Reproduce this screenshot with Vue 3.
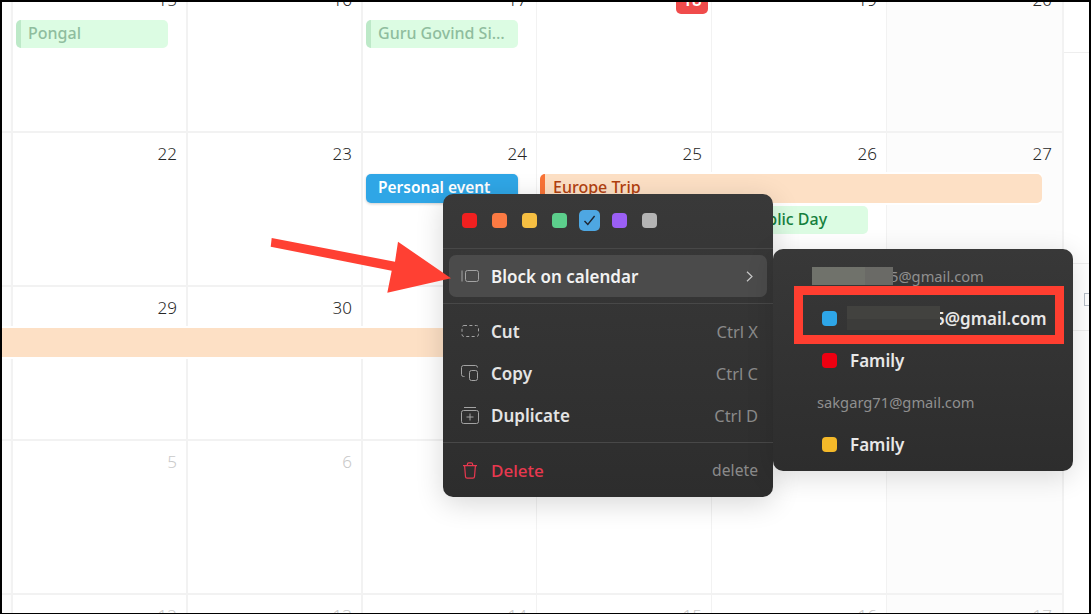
<template>
  <div class="frame">
    <div class="cal">
      <div class="weeks">
        <div v-for="(week, w) in weeks" :key="w" class="week">
          <div class="strip"></div>
          <div
            v-for="(day, d) in week.days"
            :key="d"
            class="cell"
            :class="{ weekend: d === 5, faded: week.faded, thin: d > 2 }"
            :style="{ gridColumn: d + 2 }"
          >
            <span v-if="day === 18 && w === 0" class="today">18</span>
            <span v-else class="num">{{ day }}</span>
          </div>
          <div
            v-for="ev in week.events"
            :key="ev.label"
            class="event"
            :class="ev.kind"
            :style="{ gridColumn: ev.col, gridRow: ev.row }"
          >
            <span class="event-label">{{ ev.label }}</span>
          </div>
        </div>
      </div>
      <aside class="panel">
        <div class="panel-row first"></div>
        <div class="panel-row second"></div>
        <div class="panel-row third"><span class="cut-box"></span></div>
      </aside>
    </div>

    <div class="menu">
      <div class="swatches">
        <span
          v-for="c in swatches"
          :key="c.color"
          class="swatch"
          :class="{ picked: c.picked }"
          :style="{ background: c.color }"
        >
          <svg v-if="c.picked" width="13" height="11" viewBox="0 0 13 11">
            <path d="M1.5 6 L4.8 9.4 L11.6 1" fill="none" stroke="#1f2530" stroke-width="1.4" />
          </svg>
        </span>
      </div>
      <div class="section">
        <div class="item active">
          <svg class="icon" width="18" height="14" viewBox="0 0 18 14" fill="none" stroke="#a3a3a3">
            <path d="M1 1.5v11" />
            <rect x="4.5" y="1.5" width="13" height="11" rx="2" />
          </svg>
          <span class="label">Block on calendar</span>
          <svg class="chev" width="7" height="11" viewBox="0 0 7 11" fill="none" stroke="#c9c9c9" stroke-width="1.2">
            <path d="M1 .8 L6 5.5 L1 10.2" />
          </svg>
        </div>
      </div>
      <div class="section edit">
        <div class="item">
          <svg class="icon" width="18" height="14" viewBox="0 0 18 14" fill="none" stroke="#a3a3a3">
            <rect x="1" y="1.5" width="16.5" height="11" rx="2" stroke-dasharray="3 2.4" />
          </svg>
          <span class="label">Cut</span>
          <span class="keys">Ctrl X</span>
        </div>
        <div class="item">
          <svg class="icon" width="18" height="16" viewBox="0 0 18 16" fill="none" stroke="#a3a3a3">
            <path d="M3.5 11.5h-1a2 2 0 0 1-2-2v-7a2 2 0 0 1 2-2h12a2 2 0 0 1 2 2" />
            <rect x="8.5" y="5.5" width="8" height="10" rx="2" />
          </svg>
          <span class="label">Copy</span>
          <span class="keys">Ctrl C</span>
        </div>
        <div class="item">
          <svg class="icon" width="18" height="17" viewBox="0 0 18 17" fill="none" stroke="#a3a3a3">
            <path d="M3 .5h12" />
            <rect x=".5" y="3.5" width="17" height="13" rx="2" />
            <path d="M9 6.5v7M5.5 10h7" />
          </svg>
          <span class="label">Duplicate</span>
          <span class="keys">Ctrl D</span>
        </div>
      </div>
      <div class="section danger">
        <div class="item">
          <svg class="icon trash" width="16" height="17" viewBox="0 0 16 17" fill="none" stroke="#e8384f" stroke-width="1.2">
            <path d="M1 3.6h14M5.4 3.4V2.2a1.4 1.4 0 0 1 1.4-1.4h2.4a1.4 1.4 0 0 1 1.4 1.4v1.2" />
            <path d="M2.6 3.8l.9 10.8a1.6 1.6 0 0 0 1.6 1.5h5.8a1.6 1.6 0 0 0 1.6-1.5l.9-10.8" />
          </svg>
          <span class="label">Delete</span>
          <span class="keys del">delete</span>
        </div>
      </div>
    </div>

    <div class="submenu">
      <div class="sub-head">
        <span class="mask mask-head"></span><span>5@gmail.com</span>
      </div>
      <div class="sub-item">
        <span class="dot" style="background: #2ea6e8"></span>
        <span class="mask mask-item"></span><span>5@gmail.com</span>
      </div>
      <div class="sub-item">
        <span class="dot" style="background: #ee0011"></span>
        <span>Family</span>
      </div>
      <div class="sub-head second">sakgarg71@gmail.com</div>
      <div class="sub-item">
        <span class="dot" style="background: #f4b929"></span>
        <span>Family</span>
      </div>
    </div>

    <div class="highlight"></div>
    <svg class="arrow" width="1091" height="614" viewBox="0 0 1091 614">
      <polygon points="271.7,238 395,261.7 398,241.7 451,278.3 387.3,292.7 391.7,270.7 270.7,246.7" fill="#ff4033" />
    </svg>
  </div>
</template>

<script setup>
const weeks = [
  {
    days: [15, 16, 17, 18, 19, 20],
    events: [
      { label: "Pongal", kind: "holiday dim", col: "2", row: "2" },
      { label: "Guru Govind Singh Jayanti", kind: "holiday dim", col: "4", row: "2" },
    ],
  },
  {
    days: [22, 23, 24, 25, 26, 27],
    events: [
      { label: "Personal event", kind: "personal", col: "4", row: "2" },
      { label: "Europe Trip", kind: "trip", col: "5 / span 3", row: "2" },
      { label: "Republic Day", kind: "holiday", col: "6", row: "3" },
    ],
  },
  {
    days: [29, 30, 31, 1, 2, 3],
    events: [{ label: "", kind: "trip-rest", col: "1 / span 4", row: "2" }],
  },
  { days: [5, 6, 7, 8, 9, 10], faded: true, events: [] },
  { days: [12, 13, 14, 15, 16, 17], faded: true, events: [] },
];

const swatches = [
  { color: "#f02020" },
  { color: "#fb7a43" },
  { color: "#f6bf42" },
  { color: "#5ccf8c" },
  { color: "#4ea7e2", picked: true },
  { color: "#9b5ff5" },
  { color: "#b4b4b4" },
];
</script>

<style>
html,
body {
  margin: 0;
  background: #000;
}
</style>

<style scoped>
.frame {
  position: relative;
  box-sizing: border-box;
  width: 1091px;
  height: 614px;
  border: solid #000;
  border-width: 2px 2px 1px 2px;
  overflow: hidden;
  background: #fff;
  font-family: "Noto Sans", "Open Sans", sans-serif;
  color: #333;
}

.cal {
  display: flex;
  height: 100%;
}

.weeks {
  flex: none;
  width: 1060px;
  margin-top: -23px;
}

.week {
  box-sizing: border-box;
  height: 154px;
  display: grid;
  grid-template-columns: 9px repeat(5, 175px) 176px;
  grid-template-rows: 41px 32px 32px 1fr;
  border-bottom: 2px solid #f2f2f2;
}

.strip {
  grid-column: 1;
  grid-row: 1 / -1;
  background: #fcfcfc;
}

.cell {
  grid-row: 1 / -1;
  box-sizing: border-box;
  border-left: 2px solid #f2f2f2;
  padding: 9px 9px 0 0;
  text-align: right;
  font-size: 17px;
  font-weight: 300;
  line-height: 24px;
  color: #262626;
}

.cell.thin {
  border-left-width: 1px;
}

.cell.weekend {
  background: #fcfcfc;
  padding-right: 10px;
}

.cell.faded {
  color: #c9c9c9;
}

.today {
  display: inline-block;
  box-sizing: border-box;
  width: 32px;
  height: 26px;
  margin-right: -6px;
  border-radius: 5px;
  background: #f04b4b;
  color: #fff;
  font-weight: 600;
  text-align: center;
}

.event {
  box-sizing: border-box;
  height: 29px;
  margin: 0 18px 0 5px;
  padding-left: 12px;
  border-radius: 5px;
  font-size: 16px;
  font-weight: 600;
  line-height: 27px;
  box-shadow: 0 2px 0 #fff, 0 -2px 0 #fff;
  min-width: 0;
}

.event-label {
  display: block;
  overflow: hidden;
  white-space: nowrap;
  text-overflow: ellipsis;
  padding-right: 8px;
}

.holiday {
  height: 28px;
  padding-left: 7px;
  border-left: 5px solid #22c55e;
  background: #dcfce3;
  color: #15803d;
  font-weight: 500;
}

.holiday.dim {
  border-left-color: #bde9c8;
  color: #8fbd9e;
}

.personal {
  background: #2fa6e6;
  color: #fff;
  font-size: 15.5px;
  box-shadow: 0 1px 3px rgba(0, 0, 0, 0.2);
}

.trip {
  margin: 0 20px 0 4px;
  padding-left: 8px;
  border-left: 5px solid #f97336;
  background: #fde0c5;
  color: #b2400f;
  font-weight: 500;
}

.trip-rest {
  margin: 0;
  border-radius: 0;
  background: #fde0c5;
}

.panel {
  flex: 1;
  border-left: 2px solid #f2f2f2;
}

.panel-row {
  box-sizing: border-box;
  border-bottom: 1px solid #eee;
}

.panel-row.first {
  height: 51px;
}

.panel-row.second {
  height: 211px;
}

.panel-row.third {
  height: 67px;
  padding: 29px 0 0 20px;
}

.cut-box {
  display: block;
  width: 8px;
  height: 11px;
  border: 1px solid #b8bfc8;
  border-right: 0;
}

.menu {
  position: absolute;
  left: 441px;
  top: 192px;
  width: 330px;
  height: 303px;
  border-radius: 10px;
  background: linear-gradient(#393939, #2d2d2d);
  box-shadow: 0 6px 28px rgba(0, 0, 0, 0.16);
}

.swatches {
  box-sizing: border-box;
  height: 55px;
  padding: 0 0 1px 19px;
  display: flex;
  align-items: center;
  gap: 15px;
  border-bottom: 1px solid #484848;
}

.swatch {
  width: 15px;
  height: 15px;
  border-radius: 4px;
  display: flex;
  align-items: center;
  justify-content: center;
}

.swatch.picked {
  width: 21px;
  height: 21px;
  margin: 0 -3px;
  border-radius: 5px;
}

.section {
  box-sizing: border-box;
  padding: 6px;
  border-bottom: 1px solid #484848;
}

.section.danger {
  border-bottom: 0;
}

.item {
  height: 42px;
  padding: 0 9px 0 12px;
  display: flex;
  align-items: center;
  border-radius: 7px;
  font-size: 17px;
  font-weight: 600;
  color: #e4e4e4;
}

.item.active {
  background: #4b4b4b;
  color: #f2f2f2;
}

.icon {
  flex: none;
  margin-right: 12px;
}

.icon.trash {
  margin: 0 13px 0 1px;
}

.label {
  flex: 1;
}

.keys {
  font-size: 16.5px;
  font-weight: 400;
  color: #8a8a8a;
}

.keys.del {
  font-size: 15.7px;
}

.chev {
  margin-right: 5px;
}

.danger .label {
  color: #e8384f;
  font-weight: 500;
}

.submenu {
  position: absolute;
  left: 771px;
  top: 247px;
  box-sizing: border-box;
  width: 300px;
  height: 222px;
  padding-top: 6px;
  border-radius: 10px;
  background: linear-gradient(#383838, #2d2d2d);
  box-shadow: 0 6px 28px rgba(0, 0, 0, 0.14);
}

.sub-head {
  height: 42px;
  padding-left: 39px;
  display: flex;
  align-items: center;
  font-size: 14.7px;
  color: #8f8f8f;
}

.sub-head.second {
  padding-left: 44px;
}

.sub-item {
  height: 42px;
  padding-left: 49px;
  display: flex;
  align-items: center;
  font-size: 17px;
  font-weight: 600;
  color: #e8e8e8;
}

.dot {
  flex: none;
  width: 15px;
  height: 15px;
  margin-right: 13px;
  border-radius: 4px;
}

.mask {
  flex: none;
  position: relative;
}

.mask-head {
  width: 81px;
  height: 18px;
  margin-right: -3px;
  background: linear-gradient(90deg, #70726b 0 66%, #6a6a66 66% 100%);
}

.mask-item {
  width: 93px;
  height: 24px;
  margin-left: -3px;
  margin-right: -5px;
  background: linear-gradient(#42423f 0 55%, #3c3c3a 55% 100%);
}

.highlight {
  position: absolute;
  left: 792px;
  top: 284px;
  box-sizing: border-box;
  width: 270px;
  height: 58px;
  border: 9px solid #ff3e30;
}

.arrow {
  position: absolute;
  left: -2px;
  top: -2px;
  pointer-events: none;
}
</style>
